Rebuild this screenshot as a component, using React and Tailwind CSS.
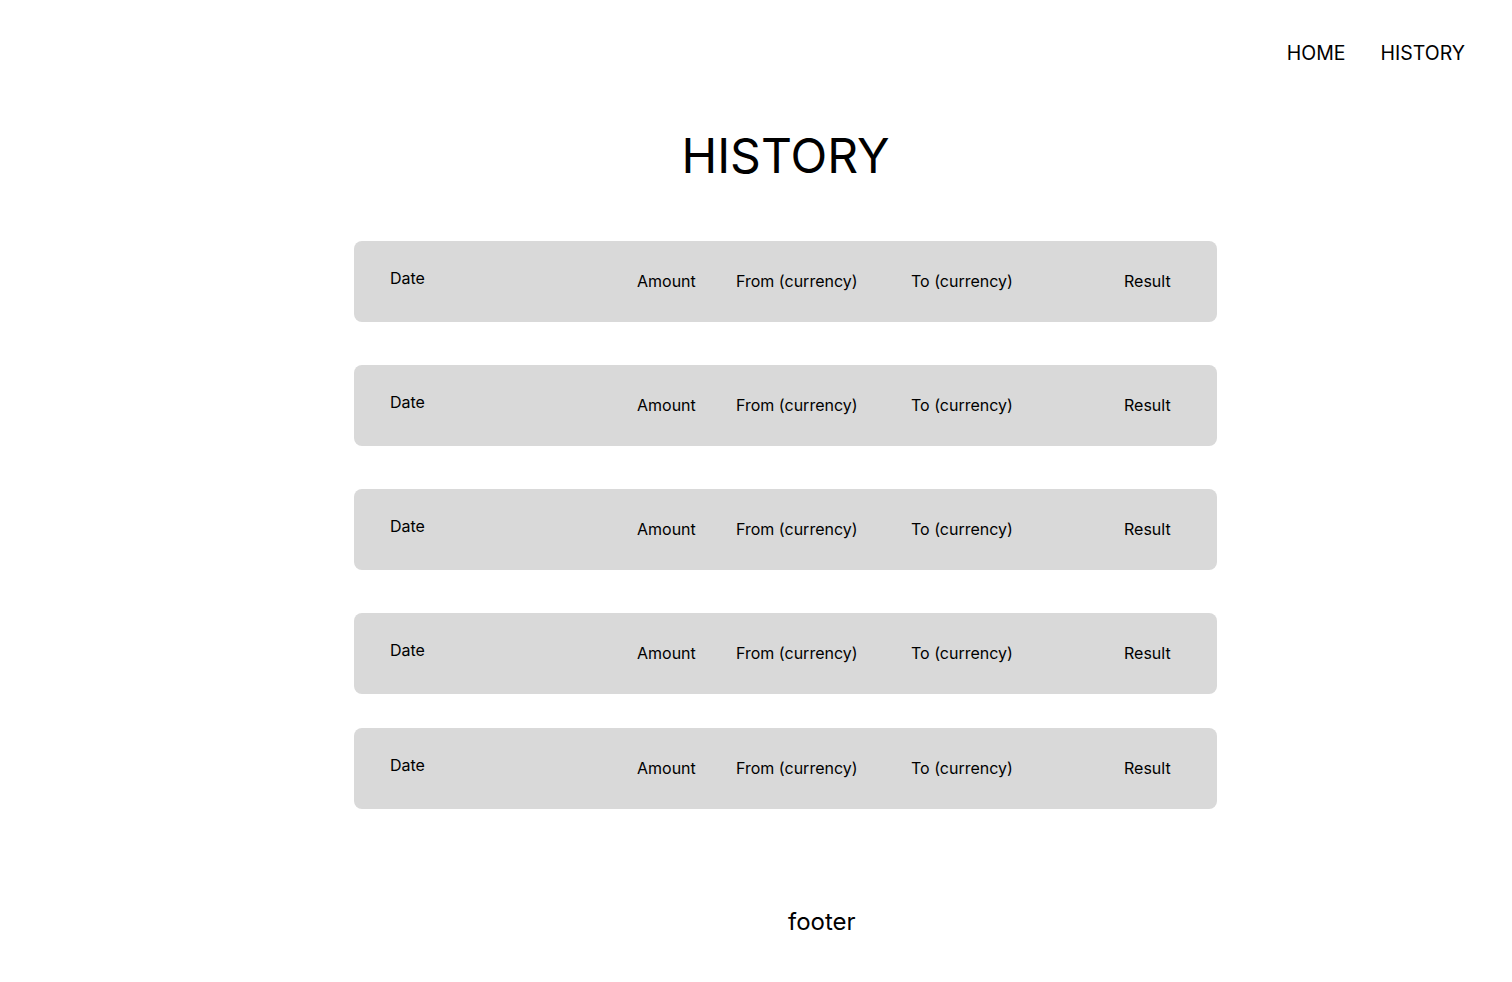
const rows = [
  { mt: "mt-[56px]" },
  { mt: "mt-[43px]" },
  { mt: "mt-[43px]" },
  { mt: "mt-[43px]" },
  { mt: "mt-[34px]" },
];

export default function App() {
  return (
    <div
      className="min-h-screen bg-white text-black"
      style={{ fontFamily: "Inter, 'Noto Sans', sans-serif" }}
    >
      {/* Nav */}
      <nav className="flex justify-end gap-[35px] pt-[41px] pr-[47px] text-[19.5px] leading-[24px]">
        <a href="#">HOME</a>
        <a href="#">HISTORY</a>
      </nav>

      <main className="ml-[354px] w-[863px]">
        <h1 className="mt-[62px] text-center text-[48px] leading-[58px] font-normal">
          HISTORY
        </h1>

        {rows.map((row, i) => (
          <HistoryRow key={i} className={row.mt} />
        ))}
      </main>

      <footer className="mt-[98px] pl-[788px] text-[24px] leading-[29px] pb-[40px]">
        footer
      </footer>
    </div>
  );
}

function HistoryRow({ className }) {
  return (
    <div
      className={`${className} flex items-start h-[81px] rounded-[8px] bg-[#d9d9d9] pl-[36px] text-[16px] leading-[20px]`}
    >
      <span className="w-[247px] mt-[27px]">Date</span>
      <span className="w-[99px] mt-[30px]">Amount</span>
      <span className="w-[175px] mt-[30px]">From (currency)</span>
      <span className="w-[213px] mt-[30px]">To (currency)</span>
      <span className="mt-[30px]">Result</span>
    </div>
  );
}
